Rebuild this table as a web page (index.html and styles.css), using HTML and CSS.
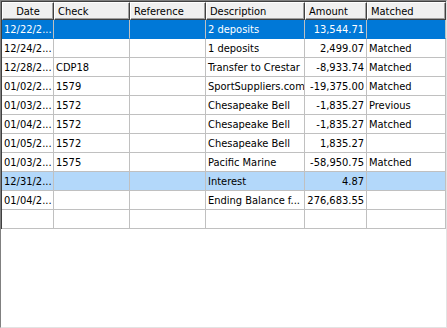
FILE: index.html
```html
<!DOCTYPE html>
<html lang="en">
<head>
    <meta charset="UTF-8">
    <title>Register</title>
    <link rel="stylesheet" href="styles.css">
</head>
<body>
    <div class="grid-frame">
        <table class="grid">
            <colgroup>
                <col class="c-date">
                <col class="c-check">
                <col class="c-ref">
                <col class="c-desc">
                <col class="c-amount">
                <col class="c-matched">
            </colgroup>
            <thead>
                <tr>
                    <th class="center">Date</th>
                    <th>Check</th>
                    <th>Reference</th>
                    <th>Description</th>
                    <th>Amount</th>
                    <th>Matched</th>
                </tr>
            </thead>
            <tbody>
                <tr class="selected">
                    <td>12/22/2...</td><td></td><td></td><td>2 deposits</td><td class="num">13,544.71</td><td></td>
                </tr>
                <tr>
                    <td>12/24/2...</td><td></td><td></td><td>1 deposits</td><td class="num">2,499.07</td><td>Matched</td>
                </tr>
                <tr>
                    <td>12/28/2...</td><td>CDP18</td><td></td><td>Transfer to Crestar</td><td class="num">-8,933.74</td><td>Matched</td>
                </tr>
                <tr>
                    <td>01/02/2...</td><td>1579</td><td></td><td>SportSuppliers.com</td><td class="num">-19,375.00</td><td>Matched</td>
                </tr>
                <tr>
                    <td>01/03/2...</td><td>1572</td><td></td><td>Chesapeake Bell</td><td class="num">-1,835.27</td><td>Previous</td>
                </tr>
                <tr>
                    <td>01/04/2...</td><td>1572</td><td></td><td>Chesapeake Bell</td><td class="num">-1,835.27</td><td>Matched</td>
                </tr>
                <tr>
                    <td>01/05/2...</td><td>1572</td><td></td><td>Chesapeake Bell</td><td class="num">1,835.27</td><td></td>
                </tr>
                <tr>
                    <td>01/03/2...</td><td>1575</td><td></td><td>Pacific Marine</td><td class="num">-58,950.75</td><td>Matched</td>
                </tr>
                <tr class="marked">
                    <td>12/31/2...</td><td></td><td></td><td>Interest</td><td class="num">4.87</td><td></td>
                </tr>
                <tr>
                    <td>01/04/2...</td><td></td><td></td><td>Ending Balance f...</td><td class="num">276,683.55</td><td></td>
                </tr>
                <tr>
                    <td></td><td></td><td></td><td></td><td></td><td></td>
                </tr>
            </tbody>
        </table>
    </div>
</body>
</html>
```

FILE: styles.css
```css
body {
    margin: 0;
    background: #ffffff;
    font-family: "DejaVu Sans Condensed", "DejaVu Sans", sans-serif;
    font-size: 11px;
    color: #000;
}
.grid-frame {
    width: 447px;
    height: 328px;
    box-sizing: border-box;
    border-style: solid;
    border-width: 1px;
    border-color: #808080 #e3e3e3 #e3e3e3 #808080;
    background: #fff;
}
.grid-frame .grid {
    border-left: 1px solid #404040;
    border-top: 1px solid #404040;
}
.grid {
    border-collapse: separate;
    border-spacing: 0;
    table-layout: fixed;
    width: 444px;
}
.c-date { width: 52px; }
.c-check { width: 76px; }
.c-ref { width: 76px; }
.c-desc { width: 99px; }
.c-amount { width: 62px; }
.c-matched { width: 79px; }

.grid th {
    height: 18px;
    padding: 0 3px;
    box-sizing: border-box;
    background: #f0f0f0;
    font-weight: normal;
    text-align: left;
    white-space: nowrap;
    overflow: hidden;
    border-top: 1px solid #ffffff;
    border-left: 1px solid #ffffff;
    border-right: 1px solid #404040;
    border-bottom: 1px solid #404040;
    box-shadow: inset -1px -1px 0 #a0a0a0;
}
.grid th.center {
    text-align: center;
}
.grid td {
    height: 19px;
    padding: 0 2px;
    box-sizing: border-box;
    white-space: nowrap;
    overflow: hidden;
    border-right: 1px solid #c0c0c0;
    border-bottom: 1px solid #c0c0c0;
}
.grid td.num {
    text-align: right;
}
.grid tr.selected td {
    background: #0078d7;
    color: #fff;
    border-bottom-color: #0078d7;
}
.grid tr.marked td {
    background: #b3d8fa;
}
```
